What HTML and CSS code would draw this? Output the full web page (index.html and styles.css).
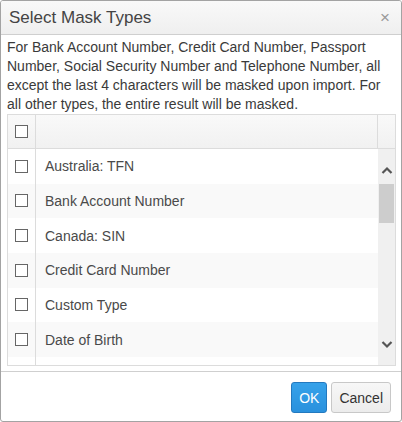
FILE: index.html
```html
<!DOCTYPE html>
<html>
<head>
<meta charset="utf-8">
<link rel="stylesheet" href="styles.css">
</head>
<body>
<div class="dialog">
  <div class="header">
    <span class="title">Select Mask Types</span>
    <span class="close">&times;</span>
  </div>
  <div class="body">
    <p class="desc">For Bank Account Number, Credit Card Number, Passport Number, Social Security Number and Telephone Number, all except the last 4 characters will be masked upon import. For all other types, the entire result will be masked.</p>
    <div class="grid">
      <div class="grid-head">
        <div class="cell-check"><span class="cb"></span></div>
        <div class="cell-name"></div>
        <div class="cell-sb"></div>
      </div>
      <div class="grid-main">
        <div class="rows">
          <div class="row"><div class="cell-check"><span class="cb"></span></div><div class="cell-name">Australia: TFN</div></div>
          <div class="row alt"><div class="cell-check"><span class="cb"></span></div><div class="cell-name">Bank Account Number</div></div>
          <div class="row"><div class="cell-check"><span class="cb"></span></div><div class="cell-name">Canada: SIN</div></div>
          <div class="row alt"><div class="cell-check"><span class="cb"></span></div><div class="cell-name">Credit Card Number</div></div>
          <div class="row"><div class="cell-check"><span class="cb"></span></div><div class="cell-name">Custom Type</div></div>
          <div class="row alt"><div class="cell-check"><span class="cb"></span></div><div class="cell-name">Date of Birth</div></div>
          <div class="row filler"><div class="cell-check"></div><div class="cell-name"></div></div>
        </div>
        <div class="scrollbar">
          <svg class="arrow" width="16" height="14" viewBox="0 0 16 14"><path d="M3.5 9 L8 4.5 L12.5 9" fill="none" stroke="#555" stroke-width="2.2"/></svg>
          <div class="track"><div class="thumb"></div></div>
          <svg class="arrow" width="16" height="14" viewBox="0 0 16 14"><path d="M3.5 5 L8 9.5 L12.5 5" fill="none" stroke="#555" stroke-width="2.2"/></svg>
        </div>
      </div>
    </div>
  </div>
  <div class="footer">
    <button class="btn btn-primary">OK</button>
    <button class="btn">Cancel</button>
  </div>
</div>
</body>
</html>
```
FILE: styles.css
```css
html, body {
  margin: 0;
  padding: 0;
  background: #fff;
}
.dialog {
  width: 402px;
  height: 422px;
  box-sizing: border-box;
  border: 1px solid #a3a3a3;
  border-radius: 3px;
  display: flex;
  flex-direction: column;
  font-family: "Liberation Sans", Arial, sans-serif;
  color: #333;
  overflow: hidden;
}
.header {
  height: 33px;
  flex: none;
  border-bottom: 1px solid #cfcfcf;
  background: linear-gradient(#f9f9f9, #efefef);
  display: flex;
  align-items: center;
  justify-content: space-between;
  padding: 0 11px 0 8px;
}
.title {
  font-size: 17px;
  color: #444;
}
.close {
  font-size: 17px;
  color: #9a9a9a;
}
.body {
  padding: 3px 5px 0 6px;
  flex: none;
}
.desc {
  margin: 0;
  font-size: 14px;
  line-height: 19px;
  color: #3a3a3a;
}
.grid {
  width: 389px;
  height: 252px;
  box-sizing: border-box;
  border: 1px solid #dcdcdc;
  display: flex;
  flex-direction: column;
}
.grid-head {
  height: 34px;
  flex: none;
  box-sizing: border-box;
  border-bottom: 1px solid #dcdcdc;
  background: linear-gradient(#f9f9f9, #f1f1f1);
  display: flex;
}
.cell-check {
  width: 28px;
  flex: none;
  box-sizing: border-box;
  border-right: 1px solid #dcdcdc;
  display: flex;
  align-items: center;
  justify-content: center;
}
.cell-name {
  flex: 1;
  display: flex;
  align-items: center;
  padding-left: 9px;
  font-size: 14px;
  color: #4a4a4a;
  white-space: nowrap;
}
.cell-sb {
  width: 17px;
  flex: none;
  border-left: 1px solid #dcdcdc;
}
.cb {
  width: 11px;
  height: 11px;
  border: 1px solid #666;
  background: #fff;
  display: block;
}
.grid-main {
  flex: 1;
  display: flex;
  min-height: 0;
}
.rows {
  flex: 1;
  overflow: hidden;
  display: flex;
  flex-direction: column;
}
.row {
  height: 34.67px;
  flex: none;
  display: flex;
  background: #fff;
}
.row.alt {
  background: #f9f9f9;
}
.row.filler {
  flex: 1;
  height: auto;
}
.scrollbar {
  width: 17px;
  flex: none;
  background: #f0f0f0;
  display: flex;
  flex-direction: column;
  align-items: center;
  padding: 15px 0 14px;
  box-sizing: border-box;
}
.arrow {
  display: block;
  flex: none;
}
.track {
  flex: 1;
  width: 15px;
  padding-top: 6px;
}
.thumb {
  width: 15px;
  height: 39px;
  background: #cdcdcd;
}
.footer {
  flex: 1;
  border-top: 1px solid #cfcfcf;
  margin-top: 5px;
  display: flex;
  justify-content: flex-end;
  align-items: flex-start;
  gap: 4px;
  padding: 10px 10px 0 0;
}
.btn {
  height: 31px;
  padding: 0 7px;
  font-family: "Liberation Sans", Arial, sans-serif;
  font-size: 14px;
  color: #333;
  background: linear-gradient(#f7f7f7, #ececec);
  border: 1px solid #c8c8c8;
  border-radius: 3px;
}
.btn-primary {
  color: #fff;
  background: linear-gradient(#36a2ea, #2a91dd);
  border-color: #2379bf;
}
```
